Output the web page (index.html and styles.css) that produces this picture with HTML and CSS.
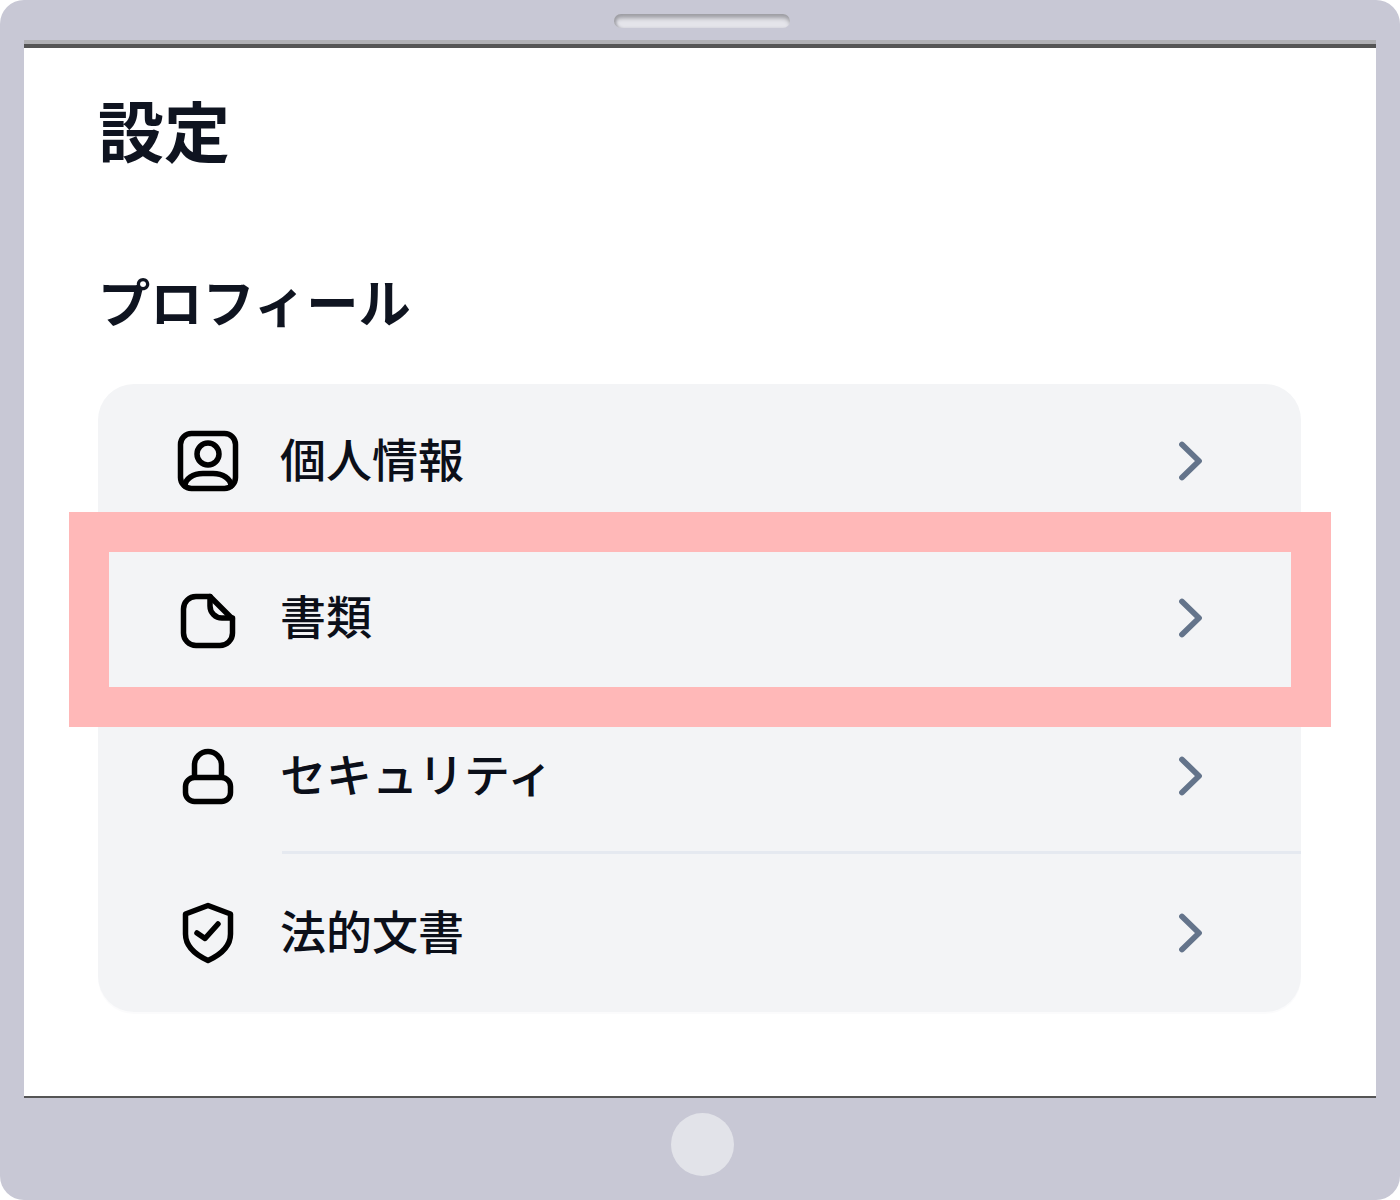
FILE: index.html
```html
<!DOCTYPE html>
<html lang="ja">
	<head>
		<meta charset="UTF-8">
		<title>設定</title>
		<link rel="stylesheet" href="styles.css">
	</head>
	<body>
		<div class="device">
			<div class="device-top">
				<div class="speaker"></div>
			</div>

			<div class="screen">
				<h1 class="page-title">設定</h1>
				<h2 class="section-title">プロフィール</h2>

				<ul class="menu">
					<li class="menu-row">
						<svg class="menu-icon" viewBox="0 0 64 64">
							<rect x="4.500" y="4.500" width="55" height="55" rx="11"/>
							<circle cx="32" cy="25" r="11"/>
							<path d="M9 57C9 50 17 44.500 27 44.500H37C47 44.500 55 50 55 57"/>
						</svg>
						<span class="menu-label">個人情報</span>
						<svg class="chevron" viewBox="0 0 32 48"><path d="M8 7.500L25 24L8 40.500"/></svg>
					</li>
					<li class="menu-row">
						<svg class="menu-icon" viewBox="0 0 64 64">
							<path d="M34 10.500H20A12.500 12.500 0 0 0 7.500 23V47A12.500 12.500 0 0 0 20 59.500H44A12.500 12.500 0 0 0 56.500 47V33Z"/>
							<path d="M34 10.500V20A12 12 0 0 0 46 32H56.500"/>
						</svg>
						<span class="menu-label">書類</span>
						<svg class="chevron" viewBox="0 0 32 48"><path d="M8 7.500L25 24L8 40.500"/></svg>
					</li>
					<li class="menu-row">
						<svg class="menu-icon" viewBox="0 0 64 64">
							<rect x="9.500" y="33.500" width="45" height="24" rx="9"/>
							<path d="M18.500 33V21A13.500 13.500 0 0 1 45.500 21V33"/>
						</svg>
						<span class="menu-label">セキュリティ</span>
						<svg class="chevron" viewBox="0 0 32 48"><path d="M8 7.500L25 24L8 40.500"/></svg>
					</li>
					<li class="menu-row">
						<svg class="menu-icon" viewBox="0 0 64 64">
							<path d="M32 4.500L54.500 13V33C54.500 46 44 54 32 59.500C20 54 9.500 46 9.500 33V13Z"/>
							<path d="M21 32L29 37.500L42 23"/>
						</svg>
						<span class="menu-label">法的文書</span>
						<svg class="chevron" viewBox="0 0 32 48"><path d="M8 7.500L25 24L8 40.500"/></svg>
					</li>
				</ul>
			</div>

			<div class="device-bottom">
				<div class="home-button"></div>
			</div>

			<div class="highlight"></div>
		</div>
	</body>
</html>
```

FILE: styles.css
```css
body {
	margin: 0;
	background-color: #ffffff;
	font-family: "Noto Sans CJK JP", "Noto Sans", sans-serif;
}
.device {
	position: relative;
	display: flex;
	flex-direction: column;
	height: 1200px;
	background-color: #c8c8d5;
	border-radius: 24px;
}
.device-top {
	display: flex;
	justify-content: center;
	height: 40px;
	padding-top: 14px;
	padding-left: 4px;
	box-sizing: border-box;
}
.speaker {
	width: 176px;
	height: 14px;
	background-color: #e4e4ea;
	border-radius: 7px;
	box-shadow: inset 0 5px 4px -1px #9d9da3, inset 3px 0 3px -1px #a9a9b0;
}
.screen {
	flex: 1;
	margin: 4px 24px 0;
	padding: 0 75px 0 74px;
	background-color: #ffffff;
	border-top: 4px solid #555555;
	border-bottom: 2px solid #555555;
	box-shadow: 0 -4px 0 #b0b0b4;
}
.page-title {
	margin: 0;
	padding-top: 36px;
	font-size: 66px;
	line-height: 88px;
	font-weight: 700;
	color: #0f1420;
}
.section-title {
	margin: 0;
	padding-top: 90px;
	font-size: 52.300px;
	line-height: 76px;
	font-weight: 700;
	color: #0f1420;
}
.menu {
	margin: 46px 0 0;
	padding: 0;
	list-style-type: none;
	background-color: #f3f4f6;
	border-radius: 36px;
	box-shadow: 0 2px 1px #fbfbfc;
}
.menu-row {
	display: flex;
	align-items: center;
	height: 157px;
	box-sizing: border-box;
	padding-left: 78px;
	padding-right: 95px;
	padding-bottom: 2px;
}
.menu-row:nth-child(1) {
	height: 156px;
}
.menu-row:nth-child(3) {
	position: relative;
	height: 159px;
}
.menu-row:nth-child(3)::after {
	content: "";
	position: absolute;
	left: 184px;
	right: 0;
	bottom: 2px;
	height: 3px;
	background-color: #e5e9f0;
}
.menu-row:nth-child(4) {
	height: 156px;
}
.menu-icon {
	flex: none;
	width: 64px;
	height: 64px;
	fill: none;
	stroke: #000000;
	stroke-width: 5.500;
	stroke-linecap: round;
	stroke-linejoin: round;
}
.menu-label {
	flex: 1;
	margin-left: 40px;
	margin-bottom: 8px;
	font-size: 46px;
	font-weight: 500;
	color: #0b0f19;
}
.chevron {
	flex: none;
	width: 32px;
	height: 48px;
	fill: none;
	stroke: #64748b;
	stroke-width: 5.800;
	stroke-linecap: round;
	stroke-linejoin: round;
}
.device-bottom {
	display: flex;
	justify-content: center;
	height: 102px;
	padding-top: 15px;
	padding-left: 5px;
	box-sizing: border-box;
}
.home-button {
	width: 63px;
	height: 63px;
	background-color: #e2e3e9;
	border-radius: 50%;
}
.highlight {
	position: absolute;
	left: 69px;
	top: 512px;
	width: 1262px;
	height: 215px;
	box-sizing: border-box;
	border: 40px solid #ffb8b8;
}
```
